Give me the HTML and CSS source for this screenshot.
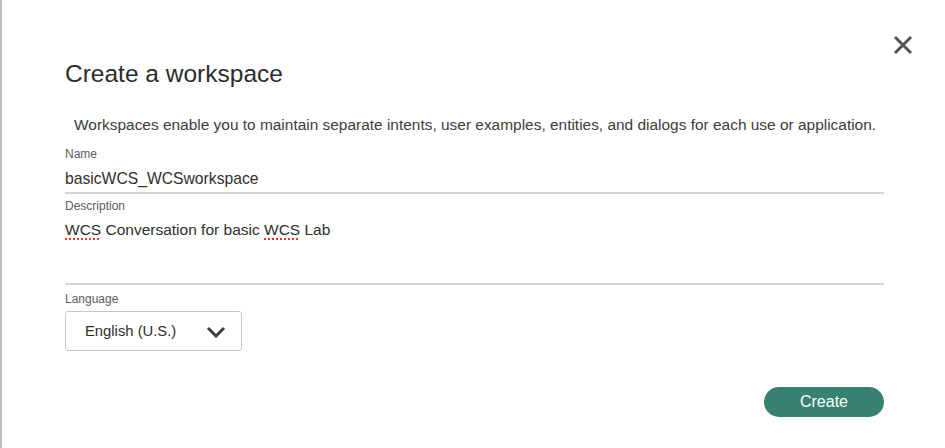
FILE: index.html
```html
<!DOCTYPE html>
<html>
<head>
<meta charset="utf-8">
<link rel="stylesheet" href="styles.css">
</head>
<body>
<div class="page">
  <div class="dialog">
    <button class="close" aria-label="Close">
      <svg width="20" height="20" viewBox="0 0 20 20"><path d="M2 2 L18 18 M18 2 L2 18" stroke="#4f5659" stroke-width="3" fill="none"/></svg>
    </button>
    <h1 class="title">Create a workspace</h1>
    <p class="intro">Workspaces enable you to maintain separate intents, user examples, entities, and dialogs for each use or application.</p>
    <div class="field">
      <div class="label">Name</div>
      <div class="value name-value">basicWCS_WCSworkspace</div>
    </div>
    <div class="field">
      <div class="label">Description</div>
      <div class="value desc-value"><span class="spell">WCS</span> Conversation for basic <span class="spell">WCS</span> Lab</div>
    </div>
    <div class="label lang-label">Language</div>
    <div class="select">
      <span>English (U.S.)</span>
      <svg width="20" height="12" viewBox="0 0 20 12"><path d="M2 2 L10 10 L18 2" stroke="#3b3f42" stroke-width="3" fill="none"/></svg>
    </div>
    <div class="actions">
      <button class="create">Create</button>
    </div>
  </div>
</div>
</body>
</html>
```

FILE: styles.css
```css
html, body {
  margin: 0;
  padding: 0;
  background: #ffffff;
}
body {
  font-family: "Liberation Sans", Arial, sans-serif;
  color: #333;
}
.page {
  height: 448px;
  border-left: 2px solid #b9c1c6;
  box-sizing: border-box;
  overflow: hidden;
}
.dialog {
  position: relative;
  padding: 0 61px 0 63px;
}
.close {
  position: absolute;
  top: 35px;
  right: 32px;
  width: 20px;
  height: 20px;
  padding: 0;
  border: none;
  background: none;
}
.close svg { display: block; }
.title {
  margin: 0;
  padding-top: 60px;
  font-size: 24.5px;
  line-height: 28px;
  font-weight: normal;
  color: #2c2c2c;
}
.intro {
  margin: 28px 0 0 9px;
  font-size: 15.45px;
  line-height: 18px;
  color: #3c3c3c;
}
.field {
  border-bottom: 2px solid #d3d7da;
}
.label {
  font-size: 12px;
  line-height: 14px;
  color: #5b5b5b;
}
.field:first-of-type .label { margin-top: 13px; }
.value {
  font-size: 16px;
  line-height: 20px;
  color: #2f2f2f;
}
.name-value {
  margin-top: 8px;
  padding-bottom: 3px;
  font-size: 15.7px;
}
.desc-value {
  margin-top: 7px;
  height: 63px;
  font-size: 15.5px;
}
.field + .field .label { margin-top: 5px; }
.spell {
  text-decoration-line: underline;
  text-decoration-style: dotted;
  text-decoration-color: #e0352b;
  text-decoration-thickness: 2px;
  text-underline-offset: 3px;
}
.lang-label { margin-top: 7px; }
.select {
  margin-top: 5px;
  width: 177px;
  height: 40px;
  box-sizing: border-box;
  border: 1px solid #c5c8ca;
  border-radius: 3px;
  display: flex;
  align-items: center;
  justify-content: space-between;
  padding: 0 15px 0 19px;
  font-size: 14.8px;
  color: #2f2f2f;
}
.select svg { display: block; margin-top: 2px; }
.actions {
  display: flex;
  justify-content: flex-end;
  margin-top: 36px;
}
.create {
  width: 120px;
  height: 30px;
  border: none;
  border-radius: 15px;
  background: #368170;
  color: #fff;
  font-family: "Liberation Sans", Arial, sans-serif;
  font-size: 16px;
  padding: 0;
}
```
